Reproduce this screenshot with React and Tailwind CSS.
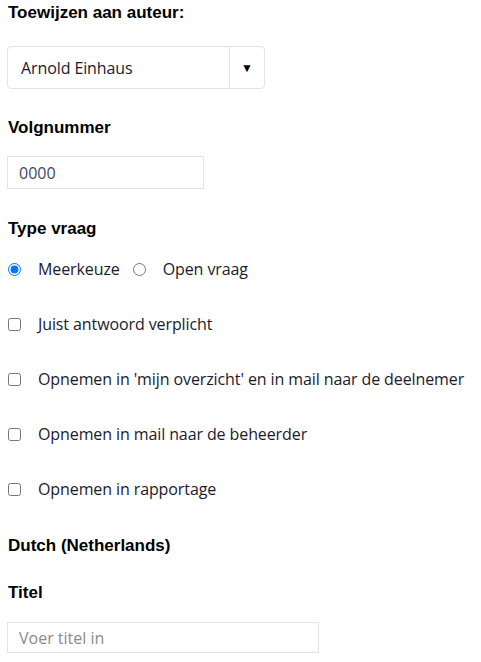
import { useState } from "react";

const body = { fontFamily: '"Open Sans", "Noto Sans", sans-serif' };

const Label = ({ children, className = "" }) => (
  <h3 className={`font-['Liberation_Sans',Arial,sans-serif] font-bold text-[17px] text-black leading-[20px] ${className}`}>
    {children}
  </h3>
);

const Check = ({ label, checked, onChange }) => (
  <label className="flex items-center h-[20px] cursor-pointer">
    <input
      type="checkbox"
      checked={checked}
      onChange={onChange}
      className="w-[13px] h-[13px] m-0 ml-[8px] mr-[17px] accent-[#0075ff]"
    />
    <span className="text-[16px] text-[#1a1a2e] tracking-[-0.1px]">{label}</span>
  </label>
);

export default function App() {
  const [type, setType] = useState("meerkeuze");
  const [checks, setChecks] = useState({ a: false, b: false, c: false, d: false });
  const toggle = (k) => setChecks((c) => ({ ...c, [k]: !c[k] }));

  return (
    <div className="bg-white w-[481px] min-h-[662px] pt-[3px]" style={body}>
      <Label className="pl-[8px]">Toewijzen aan auteur:</Label>

      {/* Author select */}
      <div className="ml-[7px] mt-[23px] w-[258px] h-[43px] border border-[#e3e3e3] rounded-[4px] flex items-center">
        <span className="flex-1 pl-[13px] text-[16px] text-[#1a1a2e] tracking-[-0.1px]">Arnold Einhaus</span>
        <div className="w-[35px] h-full border-l border-[#e3e3e3] flex items-center justify-center text-[12px] text-black">
          ▼
        </div>
      </div>

      <Label className="pl-[8px] mt-[29px]">Volgnummer</Label>
      <input
        defaultValue="0000"
        className="block ml-[7px] mt-[18px] w-[197px] h-[33px] border border-[#e3e3e3] px-[11px] text-[16px] text-[#3c4a66] outline-none"
      />

      <Label className="pl-[8px] mt-[30px]">Type vraag</Label>
      <div className="flex items-center h-[20px] mt-[20px]">
        <input
          type="radio"
          name="type"
          checked={type === "meerkeuze"}
          onChange={() => setType("meerkeuze")}
          className="w-[13px] h-[13px] m-0 ml-[8px] mr-[17px] accent-[#0075ff]"
        />
        <span className="text-[16px] text-[#1a1a2e] tracking-[-0.1px] mr-[13px]">Meerkeuze</span>
        <input
          type="radio"
          name="type"
          checked={type === "open"}
          onChange={() => setType("open")}
          className="w-[13px] h-[13px] m-0 mr-[17px] accent-[#0075ff]"
        />
        <span className="text-[16px] text-[#1a1a2e] tracking-[-0.1px]">Open vraag</span>
      </div>

      <div className="flex flex-col gap-[35px] mt-[35px]">
        <Check label="Juist antwoord verplicht" checked={checks.a} onChange={() => toggle("a")} />
        <Check
          label="Opnemen in 'mijn overzicht' en in mail naar de deelnemer"
          checked={checks.b}
          onChange={() => toggle("b")}
        />
        <Check label="Opnemen in mail naar de beheerder" checked={checks.c} onChange={() => toggle("c")} />
        <Check label="Opnemen in rapportage" checked={checks.d} onChange={() => toggle("d")} />
      </div>

      <Label className="pl-[8px] mt-[37px]">Dutch (Netherlands)</Label>
      <Label className="pl-[8px] mt-[27px]">Titel</Label>
      <input
        placeholder="Voer titel in"
        className="block ml-[7px] mt-[19px] w-[312px] h-[31px] border border-[#e3e3e3] px-[11px] text-[16px] text-[#1a1a2e] placeholder:text-[#8a8a8a] outline-none"
      />
    </div>
  );
}
